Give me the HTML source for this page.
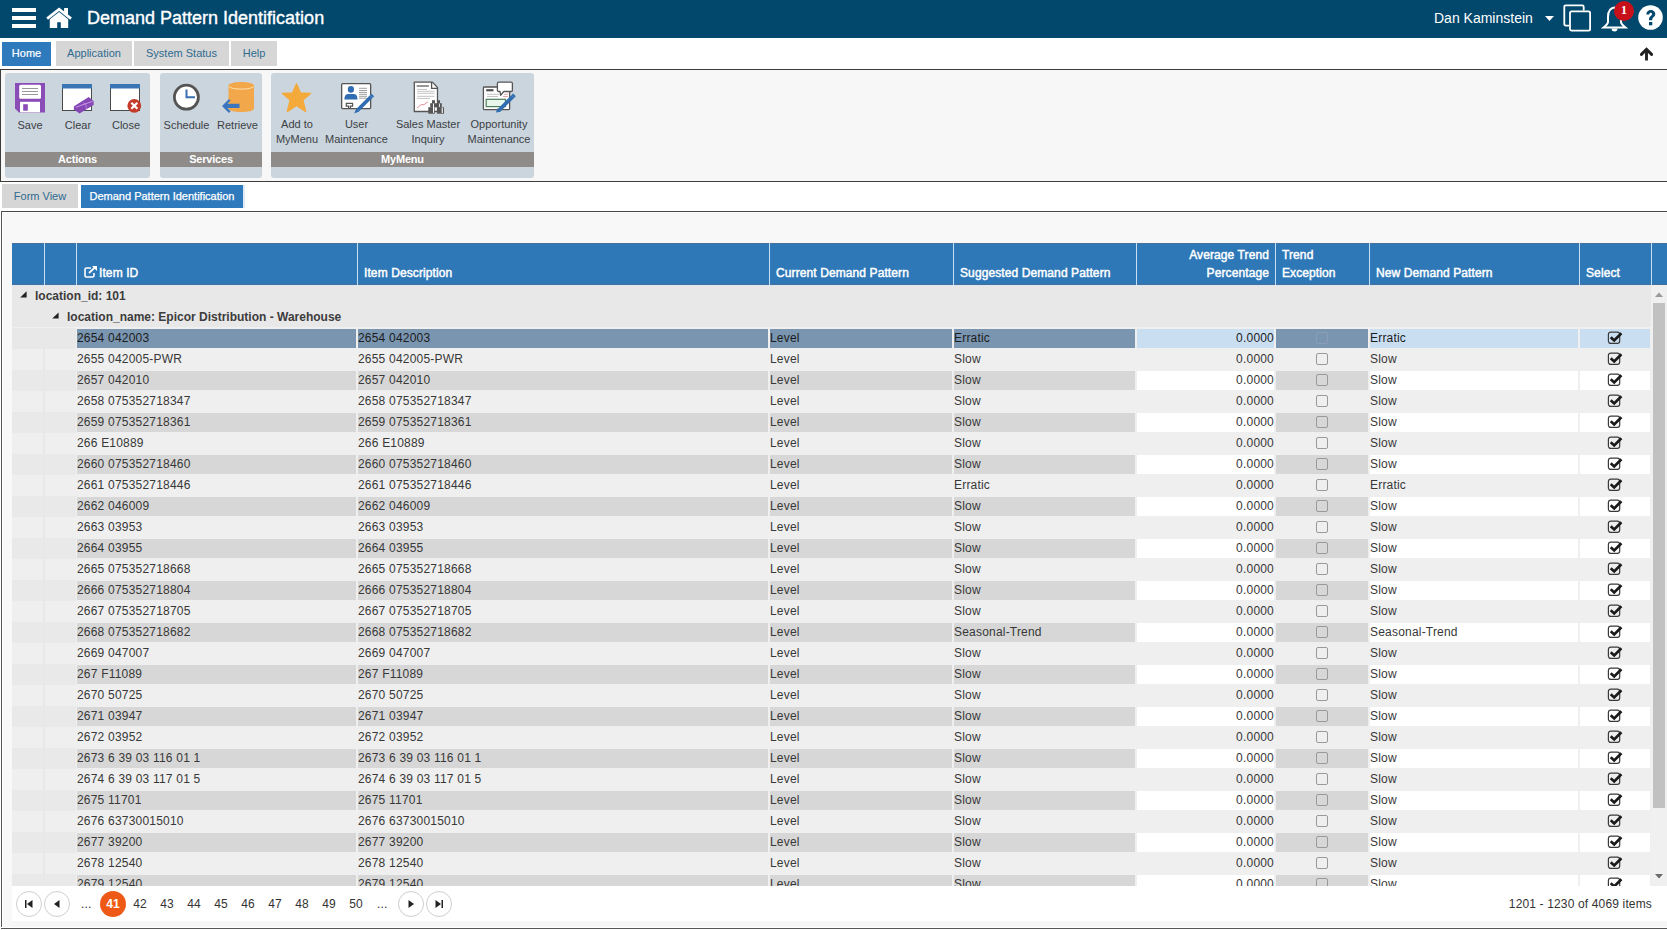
<!DOCTYPE html><html><head><meta charset="utf-8"><title>Demand Pattern Identification</title><style>
*{box-sizing:border-box;margin:0;padding:0}
html,body{width:1667px;height:930px;overflow:hidden;background:#fff;font-family:"Liberation Sans",sans-serif;color:#333}
.a{position:absolute}
#hdr{left:0;top:0;width:1667px;height:38px;background:#02486d}
#title{left:87px;top:7px;-webkit-text-stroke:0.35px #fff;font-size:18px;color:#fff;white-space:nowrap;line-height:22px}
#user{left:1434px;top:10px;font-size:14px;color:#fff;white-space:nowrap;line-height:16px}
.rtab{top:42px;height:24px;font-size:11px;line-height:24px;text-align:center;background:#d6d6d6;color:#2f6b8f;white-space:nowrap}
.rtab.on{background:#2f7abd;color:#fff;line-height:22px !important;-webkit-text-stroke:0.2px #fff}
#ribbon{left:0;top:69px;width:1667px;height:113px;border-top:1px solid #3d3d3d;border-bottom:1px solid #3d3d3d;border-left:1px solid #3d3d3d;background:#f7f7f7}
.grp{top:73px;height:105px;background:#cbd5de;border-radius:3px}
.glbl{left:0;right:0;top:79px;height:15px;background:#8e8b88;color:#fff;font-weight:bold;font-size:11px;line-height:15px;text-align:center;letter-spacing:-0.2px}
.bt{font-size:11px;line-height:15px;color:#3b3f44;text-align:center;white-space:nowrap;width:90px}
.ftab{top:184px;height:24px;font-size:11px;line-height:24px;text-align:center;background:#d6d6d6;color:#2f6b8f;white-space:nowrap}
.ftab.on{background:#2f7abd;color:#fff;top:185px;height:23px;line-height:22px;-webkit-text-stroke:0.25px #fff}
#content{left:1px;top:211px;width:1666px;height:719px;border-top:1px solid #4a4a4a;border-left:1px solid #555;background:#f8f8f8;box-shadow:inset 1px 1px 0 #fff}
#ghead{left:12px;top:243px;width:1655px;height:42px;background:#2e78b8}
.hc{top:243px;height:42px;border-left:1px solid #c6e0f7}
.ht{font-size:12px;font-weight:normal;color:#fff;white-space:nowrap;line-height:18px;letter-spacing:0.1px;-webkit-text-stroke:0.45px #fff}
#gbody{left:12px;top:285px;width:1639px;height:601px;background:#efefef;overflow:hidden}
.row{position:absolute;left:0;width:1639px;height:21px}
.c{position:absolute;top:1px;height:19px;font-size:12px;line-height:19px;white-space:nowrap;overflow:hidden;color:#383838;letter-spacing:0.2px}
.ro{background:#efefef}
.alt .ro{background:#d7d7d7}
.alt .ed{background:#fff}
.sel .ro{background:#7a95b0;color:#1c1c1c}
.sel .ed{background:#cadef2;color:#1c1c1c}
.ind{position:absolute;top:0;height:21px;background:#e9e9e9}
.row.lt .ind{background:#efefef}
.ind0{position:absolute;top:0;height:21px;background:#e8e8e8}
.grow{position:absolute;left:0;width:1639px;height:21px;background:#e9e8e9;font-size:12px;font-weight:bold;line-height:23px;color:#3c3c3c;white-space:nowrap}
.cb{position:absolute;width:12px;height:12px;border:1px solid #9a9a9a;border-radius:2px}
#pager{left:12px;top:886px;width:1655px;height:35px;background:#fff}
.pb{top:891px;width:26px;height:26px;border:1px solid #cfcfcf;border-radius:50%;background:#fff}
.pn{top:895px;font-size:12px;line-height:18px;color:#333;white-space:nowrap;letter-spacing:0.15px}
</style></head><body><div id="hdr" class="a"></div><div class="a" style="left:12px;top:8px;width:24px;height:4px;background:#fff"></div><div class="a" style="left:12px;top:16px;width:24px;height:4px;background:#fff"></div><div class="a" style="left:12px;top:24px;width:24px;height:4px;background:#fff"></div><svg class="a" style="left:46px;top:7px" width="27" height="22" viewBox="0 0 27 22"><path d="M0.3 10.6 L13.1 0.6 L25.9 10.6 L24.2 12.7 L13.1 4 L2 12.7 Z" fill="#fff"/><rect x="18.1" y="1" width="3.9" height="6.5" fill="#fff"/><path d="M3.8 12.3 L13.1 4.9 L22.2 12.3 L22.2 21 L14.8 21 L14.8 15.3 L11.2 15.3 L11.2 21 L3.8 21 Z" fill="#fff"/></svg><div id="title" class="a">Demand Pattern Identification</div><div id="user" class="a">Dan Kaminstein</div><svg class="a" style="left:1545px;top:16px" width="9" height="5" viewBox="0 0 9 5"><path d="M0 0 L9 0 L4.5 5 Z" fill="#fff"/></svg><svg class="a" style="left:1562px;top:3px" width="30" height="30" viewBox="0 0 30 30"><path d="M7 22.6 H3.8 Q2.3 22.6 2.3 21.1 V3.8 Q2.3 2.3 3.8 2.3 H20.2 Q21.7 2.3 21.7 3.8 V7.5" fill="none" stroke="#fff" stroke-width="1.8"/><rect x="8" y="8.3" width="20.1" height="19.4" rx="1.6" fill="none" stroke="#fff" stroke-width="1.8"/></svg><svg class="a" style="left:1601px;top:3px" width="30" height="30" viewBox="0 0 30 30"><path d="M13.5 4.5 C8 5 7 9.5 7 14 L7 19 C7 21 5 22.5 2.5 24.5 L24.5 24.5 C22 22.5 20 21 20 19 L20 14 C20 9.5 19 5 13.5 4.5 Z" fill="none" stroke="#fff" stroke-width="2"/><path d="M10.5 25.5 A3 3 0 0 0 16.5 25.5 Z" fill="#fff"/></svg><div class="a" style="left:1614px;top:1px;width:20px;height:20px;border-radius:50%;background:#c8101b"></div><div class="a" style="left:1614px;top:2px;width:20px;height:16px;font-family:'Liberation Serif',serif;font-size:12px;font-weight:bold;line-height:16px;text-align:center;color:#fff">1</div><svg class="a" style="left:1638px;top:5px" width="26" height="26" viewBox="0 0 26 26"><circle cx="12.5" cy="12.5" r="12.3" fill="#fff"/><path d="M8.3 9.5 C8.3 6.5 10.5 5 12.8 5 C15.5 5 17.3 6.8 17.3 9 C17.3 11.8 14.2 12.3 14.2 14.8 L14.2 15.3 L11 15.3 L11 14.5 C11 11 14 10.8 14 9.2 C14 8.3 13.4 7.8 12.6 7.8 C11.7 7.8 11.3 8.6 11.3 9.5 Z" fill="#02486d"/><rect x="11" y="17" width="3.3" height="3.3" fill="#02486d"/></svg><div class="a rtab on" style="left:2px;width:49px">Home</div><div class="a rtab" style="left:56px;width:76px;top:41px;height:25px;line-height:25px">Application</div><div class="a rtab" style="left:134px;width:95px;top:41px;height:25px;line-height:25px">System Status</div><div class="a rtab" style="left:231px;width:46px;top:41px;height:25px;line-height:25px">Help</div><svg class="a" style="left:1639px;top:47px" width="15" height="15" viewBox="0 0 15 15"><path d="M2.4 7.4 L7.5 2.4 L12.6 7.4" fill="none" stroke="#222" stroke-width="2.9" stroke-linecap="round" stroke-linejoin="miter"/><path d="M7.5 3.5 V13.5" fill="none" stroke="#222" stroke-width="2.9" stroke-linecap="butt"/></svg><div id="ribbon" class="a"></div><div class="a grp" style="left:5px;width:145px"><div class="a glbl">Actions</div></div><div class="a grp" style="left:160px;width:102px"><div class="a glbl">Services</div></div><div class="a grp" style="left:271px;width:263px"><div class="a glbl">MyMenu</div></div><div class="a bt" style="left:-15px;top:118px">Save</div><div class="a bt" style="left:33px;top:118px">Clear</div><div class="a bt" style="left:81px;top:118px">Close</div><div class="a bt" style="left:141.5px;top:118px">Schedule</div><div class="a bt" style="left:192.5px;top:118px">Retrieve</div><div class="a bt" style="left:252px;top:117px">Add to<br>MyMenu</div><div class="a bt" style="left:311.5px;top:117px">User<br>Maintenance</div><div class="a bt" style="left:383px;top:117px">Sales Master<br>Inquiry</div><div class="a bt" style="left:454px;top:117px">Opportunity<br>Maintenance</div><svg class="a" style="left:15px;top:83px" width="30" height="30" viewBox="0 0 30 30"><path d="M0 0 L30 0 L30 29.6 L4 29.6 L0 25.6 Z" fill="#8a4cb6"/><rect x="4.2" y="1.7" width="21.8" height="14.1" rx="1.5" fill="#fff"/><rect x="7" y="5" width="16" height="0.9" fill="#8d8d8d"/><rect x="7" y="8" width="16" height="0.9" fill="#8d8d8d"/><rect x="7" y="11" width="16" height="0.9" fill="#8d8d8d"/><rect x="5" y="18.8" width="20" height="10.5" fill="#fff"/><rect x="8.2" y="21.2" width="4.6" height="6.5" fill="#8a4cb6"/></svg><svg class="a" style="left:62px;top:84px" width="34" height="31" viewBox="0 0 34 31"><rect x="0.5" y="0.5" width="29" height="26" fill="#fff" stroke="#4a4a4a" stroke-width="1"/><rect x="0" y="0" width="30" height="4.5" fill="#3a76b5"/><path d="M12 22.3 L26.7 13.1 L31.6 16.9 L31.6 20.9 L17.5 29.4 L11.8 25.4 Z" fill="#8648b4"/><path d="M13.9 23.2 L30.7 17.3" stroke="#d8a8f5" stroke-width="0.8"/><path d="M21.2 18.3 L24.1 21.1 L24.3 25.1" fill="none" stroke="#c59ae8" stroke-width="0.7"/></svg><svg class="a" style="left:110px;top:84px" width="34" height="31" viewBox="0 0 34 31"><rect x="0.5" y="0.5" width="29" height="26" fill="#fff" stroke="#4a4a4a" stroke-width="1"/><rect x="0" y="0" width="30" height="4.5" fill="#3a76b5"/><circle cx="24.3" cy="21.8" r="6.9" fill="#c43b2b"/><path d="M21.3 18.8 L27.3 24.8 M27.3 18.8 L21.3 24.8" stroke="#fff" stroke-width="2.2"/></svg><svg class="a" style="left:172px;top:83px" width="29" height="29" viewBox="0 0 29 29"><circle cx="14.4" cy="14.2" r="12" fill="#fff" stroke="#545454" stroke-width="2.8"/><path d="M14.5 6.5 L14.5 14.3 L23 14.3" fill="none" stroke="#3a6fb0" stroke-width="2"/></svg><svg class="a" style="left:221px;top:81px" width="35" height="33" viewBox="0 0 35 33"><path d="M7.5 4.5 C7.5 -0.3 33 -0.3 33 4.5 L33 27.5 C33 32.3 7.5 32.3 7.5 27.5 Z" fill="#f2a84a"/><path d="M8 5.5 C10 9 30.5 9 32.5 5.5" fill="none" stroke="#fde2b0" stroke-width="1"/><path d="M1 25 L8 18 L9.5 19.5 L6.5 22.8 L18.5 22.8 L18.5 27 L6.5 27 L9.5 30.3 L8 32 Z" fill="#3a75bd"/></svg><svg class="a" style="left:281px;top:83px" width="31" height="30" viewBox="0 0 31 30"><path d="M15.5 1 L19.4 10 L29.5 10.4 L21.8 16.8 L24.5 28.5 L15.5 22.5 L6.5 28.5 L9.2 16.8 L1.5 10.4 L11.6 10 Z" fill="#f4aa3b" stroke="#f4aa3b" stroke-width="1.5" stroke-linejoin="round"/></svg><svg class="a" style="left:341px;top:83px" width="34" height="32" viewBox="0 0 34 32"><rect x="0.65" y="0.65" width="29" height="24.9" rx="1" fill="#fff" stroke="#555" stroke-width="1.3"/><ellipse cx="9.9" cy="6.4" rx="3.1" ry="3.3" fill="#2f6db0"/><path d="M3.4 16.5 C3.4 12 5.5 10.9 7.5 10.9 H12.3 C14.5 10.9 16.5 12 16.5 16.5 Z" fill="#2f6db0"/><path d="M18 5.3 H26 M18 7.5 H26 M18 9.4 H26 M18 11.3 H26 M18 13.3 H26 M18 15.2 H26" stroke="#777" stroke-width="0.7"/><path d="M7.6 25.5 V23.2 H5.3 V20.3 H11.6 V23.2 H9.4 V25.5" fill="none" stroke="#555" stroke-width="1.2"/><path d="M31.8 12 L16.8 27" stroke="#2f6db0" stroke-width="3.8"/><path d="M18.3 28.5 L15.3 25.5 L13.2 30.6 Z" fill="#2f6db0"/><path d="M28.9 12.3 L31.5 14.9" stroke="#6a9fd6" stroke-width="0.8"/></svg><svg class="a" style="left:410px;top:78px" width="36" height="38" viewBox="0 0 36 38"><path d="M4.3 4.1 H22.4 L27.5 9.5 V33.5 H4.3 Z" fill="#fff" stroke="#555" stroke-width="1.3" stroke-linejoin="round"/><path d="M21.6 4.1 V10.3 H27.5" fill="none" stroke="#555" stroke-width="1.3"/><path d="M6.7 8 H18.9" stroke="#6a6a6a" stroke-width="1.4"/><path d="M7.1 11.4 H17 M7.1 13.3 H24.5 M7.1 15.3 H24.5 M7.1 18.3 H24.5 M7.1 20.4 H19.8" stroke="#9a9a9a" stroke-width="0.6"/><path d="M7 30 C9 28.5 11 26 13 26.5 C14 27.5 15.5 25 18 24" fill="none" stroke="#d9737a" stroke-width="0.8"/><rect x="18.3" y="29.2" width="6.4" height="6.5" fill="#555"/><rect x="27.1" y="29.2" width="6.9" height="6.5" fill="#555"/><rect x="20.2" y="25.2" width="11.6" height="4.2" fill="#555"/><rect x="22" y="22.2" width="3" height="3.2" fill="#555"/><rect x="27" y="22.2" width="3" height="3.2" fill="#555"/><rect x="23" y="25.6" width="1" height="9.2" fill="#fff"/><rect x="31.7" y="29.6" width="1.1" height="5.4" fill="#fff"/><rect x="29.2" y="25.6" width="0.8" height="3.4" fill="#fff"/></svg><svg class="a" style="left:478px;top:78px" width="40" height="38" viewBox="0 0 40 38"><rect x="5.4" y="9" width="26.2" height="22.6" rx="0.8" fill="#fff" stroke="#555" stroke-width="1.3"/><rect x="8.2" y="11.2" width="7.3" height="2.1" fill="#4a4a4a"/><path d="M9 16.3 H21 M9 18.5 H20" stroke="#a9a9a9" stroke-width="0.7"/><path d="M26 16.3 H30 M25 18.5 H30" stroke="#d98080" stroke-width="0.7"/><rect x="8.2" y="21.3" width="19.3" height="7.3" fill="#e8f6ec" stroke="#4c7d5c" stroke-width="1.2"/><path d="M19.4 5.4 Q19.4 4.1 20.7 4.1 H33.1 Q34.4 4.1 34.4 5.4 V12.2 Q34.4 13.5 33.1 13.5 H25.8 L22.6 17.2 L22 13.5 H20.7 Q19.4 13.5 19.4 12.2 Z" fill="#fff" stroke="#555" stroke-width="1.3" stroke-linejoin="round"/><path d="M36.5 16.8 L21.3 32" stroke="#2f6db0" stroke-width="3.8"/><path d="M19.6 30.3 L23 33.7 L17.8 34.6 Z" fill="#2f6db0"/><path d="M35.9 19.5 L33.9 17.5" stroke="#5b93cf" stroke-width="0.8"/></svg><div class="a ftab" style="left:2px;width:76px">Form View</div><div class="a ftab on" style="left:81px;width:162px">Demand Pattern Identification</div><div class="a" style="left:243px;top:185px;width:2px;height:23px;background:#dde9f4"></div><div id="content" class="a"></div><div id="ghead" class="a"></div><div class="a" style="left:12px;top:243px;width:1655px;height:1px;background:#44709a"></div><div class="a" style="left:12px;top:284px;width:1655px;height:1px;background:#44709a"></div><div class="a" style="left:44px;top:243px;width:1px;height:42px;background:#c6e0f7"></div><div class="a" style="left:76px;top:243px;width:1px;height:42px;background:#c6e0f7"></div><div class="a" style="left:357px;top:243px;width:1px;height:42px;background:#c6e0f7"></div><div class="a" style="left:769px;top:243px;width:1px;height:42px;background:#c6e0f7"></div><div class="a" style="left:953px;top:243px;width:1px;height:42px;background:#c6e0f7"></div><div class="a" style="left:1136px;top:243px;width:1px;height:42px;background:#c6e0f7"></div><div class="a" style="left:1275px;top:243px;width:1px;height:42px;background:#c6e0f7"></div><div class="a" style="left:1369px;top:243px;width:1px;height:42px;background:#c6e0f7"></div><div class="a" style="left:1579px;top:243px;width:1px;height:42px;background:#c6e0f7"></div><div class="a" style="left:1651px;top:243px;width:1px;height:42px;background:#c6e0f7"></div><div class="a ht" style="left:99px;top:264px">Item ID</div><svg class="a" style="left:84px;top:266px" width="14" height="12" viewBox="0 0 14 12"><path d="M7 2 H2.5 Q1 2 1 3.5 V9.5 Q1 11 2.5 11 H8.5 Q10 11 10 9.5 V7" fill="none" stroke="#fff" stroke-width="1.6"/><path d="M5 7 L11.5 0.8" stroke="#fff" stroke-width="1.8"/><path d="M8 0 H13 V5 Z" fill="#fff"/></svg><div class="a ht" style="left:364px;top:264px">Item Description</div><div class="a ht" style="left:776px;top:264px">Current Demand Pattern</div><div class="a ht" style="left:960px;top:264px">Suggested Demand Pattern</div><div class="a ht" style="left:1069px;width:200px;top:246px;text-align:right">Average Trend</div><div class="a ht" style="left:1069px;width:200px;top:264px;text-align:right">Percentage</div><div class="a ht" style="left:1282px;top:246px">Trend</div><div class="a ht" style="left:1282px;top:264px">Exception</div><div class="a ht" style="left:1376px;top:264px">New Demand Pattern</div><div class="a ht" style="left:1586px;top:264px">Select</div><div id="gbody" class="a"><div style="position:absolute;left:0;top:0;width:1639px;height:1px;background:#dfe8f2;z-index:2"></div><div class="grow" style="top:0px"><svg style="position:absolute;left:8px;top:6px" width="8" height="8" viewBox="0 0 8 8"><path d="M6.6 0.2 L6.6 6.4 L0.2 6.4 Z" fill="#222"/></svg><span style="position:absolute;left:23px;top:0">location_id: 101</span></div><div class="grow" style="top:21px"><svg style="position:absolute;left:40px;top:6px" width="8" height="8" viewBox="0 0 8 8"><path d="M6.6 0.4 L6.6 6.6 L0.2 6.6 Z" fill="#222"/></svg><span style="position:absolute;left:55px;top:0">location_name: Epicor Distribution - Warehouse</span></div><div class="row sel" style="top:43px"><div class="ind0" style="left:0;width:64px"></div><div class="c ro" style="left:65px;width:279px;">2654 042003</div><div class="c ro" style="left:346px;width:410px;">2654 042003</div><div class="c ro" style="left:758px;width:182px;">Level</div><div class="c ro" style="left:942px;width:181px;">Erratic</div><div class="c ed" style="left:1125px;width:137px;text-align:right">0.0000</div><div class="c ro" style="left:1264px;width:92px;"><div class="cb" style="left:40px;top:3px;border-color:#8a9fb5"></div></div><div class="c ed" style="left:1358px;width:208px;">Erratic</div><div class="c ed" style="left:1568px;width:70px;"><svg style="position:absolute;left:26px;top:0px" width="18" height="17" viewBox="0 0 18 17"><rect x="2.4" y="3.1" width="11.3" height="11.3" rx="2.3" fill="none" stroke="#3a3a3a" stroke-width="1.2"/><path d="M4.7 8.2 L8.2 11.4 L15.4 4.2" fill="none" stroke="#1a1a1a" stroke-width="2.7" stroke-linejoin="miter" stroke-linecap="butt"/></svg></div></div><div class="row lt" style="top:64px"><div class="ind0" style="left:0;width:64px"></div><div class="ind" style="left:0;width:31px"></div><div class="ind" style="left:33px;width:31px"></div><div class="c ro" style="left:65px;width:279px;">2655 042005-PWR</div><div class="c ro" style="left:346px;width:410px;">2655 042005-PWR</div><div class="c ro" style="left:758px;width:182px;">Level</div><div class="c ro" style="left:942px;width:181px;">Slow</div><div class="c ed" style="left:1125px;width:137px;text-align:right">0.0000</div><div class="c ro" style="left:1264px;width:92px;"><div class="cb" style="left:40px;top:3px;border-color:#9a9a9a"></div></div><div class="c ed" style="left:1358px;width:208px;">Slow</div><div class="c ed" style="left:1568px;width:70px;"><svg style="position:absolute;left:26px;top:0px" width="18" height="17" viewBox="0 0 18 17"><rect x="2.4" y="3.1" width="11.3" height="11.3" rx="2.3" fill="none" stroke="#3a3a3a" stroke-width="1.2"/><path d="M4.7 8.2 L8.2 11.4 L15.4 4.2" fill="none" stroke="#1a1a1a" stroke-width="2.7" stroke-linejoin="miter" stroke-linecap="butt"/></svg></div></div><div class="row alt" style="top:85px"><div class="ind0" style="left:0;width:64px"></div><div class="ind" style="left:0;width:31px"></div><div class="ind" style="left:33px;width:31px"></div><div class="c ro" style="left:65px;width:279px;">2657 042010</div><div class="c ro" style="left:346px;width:410px;">2657 042010</div><div class="c ro" style="left:758px;width:182px;">Level</div><div class="c ro" style="left:942px;width:181px;">Slow</div><div class="c ed" style="left:1125px;width:137px;text-align:right">0.0000</div><div class="c ro" style="left:1264px;width:92px;"><div class="cb" style="left:40px;top:3px;border-color:#9a9a9a"></div></div><div class="c ed" style="left:1358px;width:208px;">Slow</div><div class="c ed" style="left:1568px;width:70px;"><svg style="position:absolute;left:26px;top:0px" width="18" height="17" viewBox="0 0 18 17"><rect x="2.4" y="3.1" width="11.3" height="11.3" rx="2.3" fill="none" stroke="#3a3a3a" stroke-width="1.2"/><path d="M4.7 8.2 L8.2 11.4 L15.4 4.2" fill="none" stroke="#1a1a1a" stroke-width="2.7" stroke-linejoin="miter" stroke-linecap="butt"/></svg></div></div><div class="row lt" style="top:106px"><div class="ind0" style="left:0;width:64px"></div><div class="ind" style="left:0;width:31px"></div><div class="ind" style="left:33px;width:31px"></div><div class="c ro" style="left:65px;width:279px;">2658 075352718347</div><div class="c ro" style="left:346px;width:410px;">2658 075352718347</div><div class="c ro" style="left:758px;width:182px;">Level</div><div class="c ro" style="left:942px;width:181px;">Slow</div><div class="c ed" style="left:1125px;width:137px;text-align:right">0.0000</div><div class="c ro" style="left:1264px;width:92px;"><div class="cb" style="left:40px;top:3px;border-color:#9a9a9a"></div></div><div class="c ed" style="left:1358px;width:208px;">Slow</div><div class="c ed" style="left:1568px;width:70px;"><svg style="position:absolute;left:26px;top:0px" width="18" height="17" viewBox="0 0 18 17"><rect x="2.4" y="3.1" width="11.3" height="11.3" rx="2.3" fill="none" stroke="#3a3a3a" stroke-width="1.2"/><path d="M4.7 8.2 L8.2 11.4 L15.4 4.2" fill="none" stroke="#1a1a1a" stroke-width="2.7" stroke-linejoin="miter" stroke-linecap="butt"/></svg></div></div><div class="row alt" style="top:127px"><div class="ind0" style="left:0;width:64px"></div><div class="ind" style="left:0;width:31px"></div><div class="ind" style="left:33px;width:31px"></div><div class="c ro" style="left:65px;width:279px;">2659 075352718361</div><div class="c ro" style="left:346px;width:410px;">2659 075352718361</div><div class="c ro" style="left:758px;width:182px;">Level</div><div class="c ro" style="left:942px;width:181px;">Slow</div><div class="c ed" style="left:1125px;width:137px;text-align:right">0.0000</div><div class="c ro" style="left:1264px;width:92px;"><div class="cb" style="left:40px;top:3px;border-color:#9a9a9a"></div></div><div class="c ed" style="left:1358px;width:208px;">Slow</div><div class="c ed" style="left:1568px;width:70px;"><svg style="position:absolute;left:26px;top:0px" width="18" height="17" viewBox="0 0 18 17"><rect x="2.4" y="3.1" width="11.3" height="11.3" rx="2.3" fill="none" stroke="#3a3a3a" stroke-width="1.2"/><path d="M4.7 8.2 L8.2 11.4 L15.4 4.2" fill="none" stroke="#1a1a1a" stroke-width="2.7" stroke-linejoin="miter" stroke-linecap="butt"/></svg></div></div><div class="row lt" style="top:148px"><div class="ind0" style="left:0;width:64px"></div><div class="ind" style="left:0;width:31px"></div><div class="ind" style="left:33px;width:31px"></div><div class="c ro" style="left:65px;width:279px;">266 E10889</div><div class="c ro" style="left:346px;width:410px;">266 E10889</div><div class="c ro" style="left:758px;width:182px;">Level</div><div class="c ro" style="left:942px;width:181px;">Slow</div><div class="c ed" style="left:1125px;width:137px;text-align:right">0.0000</div><div class="c ro" style="left:1264px;width:92px;"><div class="cb" style="left:40px;top:3px;border-color:#9a9a9a"></div></div><div class="c ed" style="left:1358px;width:208px;">Slow</div><div class="c ed" style="left:1568px;width:70px;"><svg style="position:absolute;left:26px;top:0px" width="18" height="17" viewBox="0 0 18 17"><rect x="2.4" y="3.1" width="11.3" height="11.3" rx="2.3" fill="none" stroke="#3a3a3a" stroke-width="1.2"/><path d="M4.7 8.2 L8.2 11.4 L15.4 4.2" fill="none" stroke="#1a1a1a" stroke-width="2.7" stroke-linejoin="miter" stroke-linecap="butt"/></svg></div></div><div class="row alt" style="top:169px"><div class="ind0" style="left:0;width:64px"></div><div class="ind" style="left:0;width:31px"></div><div class="ind" style="left:33px;width:31px"></div><div class="c ro" style="left:65px;width:279px;">2660 075352718460</div><div class="c ro" style="left:346px;width:410px;">2660 075352718460</div><div class="c ro" style="left:758px;width:182px;">Level</div><div class="c ro" style="left:942px;width:181px;">Slow</div><div class="c ed" style="left:1125px;width:137px;text-align:right">0.0000</div><div class="c ro" style="left:1264px;width:92px;"><div class="cb" style="left:40px;top:3px;border-color:#9a9a9a"></div></div><div class="c ed" style="left:1358px;width:208px;">Slow</div><div class="c ed" style="left:1568px;width:70px;"><svg style="position:absolute;left:26px;top:0px" width="18" height="17" viewBox="0 0 18 17"><rect x="2.4" y="3.1" width="11.3" height="11.3" rx="2.3" fill="none" stroke="#3a3a3a" stroke-width="1.2"/><path d="M4.7 8.2 L8.2 11.4 L15.4 4.2" fill="none" stroke="#1a1a1a" stroke-width="2.7" stroke-linejoin="miter" stroke-linecap="butt"/></svg></div></div><div class="row lt" style="top:190px"><div class="ind0" style="left:0;width:64px"></div><div class="ind" style="left:0;width:31px"></div><div class="ind" style="left:33px;width:31px"></div><div class="c ro" style="left:65px;width:279px;">2661 075352718446</div><div class="c ro" style="left:346px;width:410px;">2661 075352718446</div><div class="c ro" style="left:758px;width:182px;">Level</div><div class="c ro" style="left:942px;width:181px;">Erratic</div><div class="c ed" style="left:1125px;width:137px;text-align:right">0.0000</div><div class="c ro" style="left:1264px;width:92px;"><div class="cb" style="left:40px;top:3px;border-color:#9a9a9a"></div></div><div class="c ed" style="left:1358px;width:208px;">Erratic</div><div class="c ed" style="left:1568px;width:70px;"><svg style="position:absolute;left:26px;top:0px" width="18" height="17" viewBox="0 0 18 17"><rect x="2.4" y="3.1" width="11.3" height="11.3" rx="2.3" fill="none" stroke="#3a3a3a" stroke-width="1.2"/><path d="M4.7 8.2 L8.2 11.4 L15.4 4.2" fill="none" stroke="#1a1a1a" stroke-width="2.7" stroke-linejoin="miter" stroke-linecap="butt"/></svg></div></div><div class="row alt" style="top:211px"><div class="ind0" style="left:0;width:64px"></div><div class="ind" style="left:0;width:31px"></div><div class="ind" style="left:33px;width:31px"></div><div class="c ro" style="left:65px;width:279px;">2662 046009</div><div class="c ro" style="left:346px;width:410px;">2662 046009</div><div class="c ro" style="left:758px;width:182px;">Level</div><div class="c ro" style="left:942px;width:181px;">Slow</div><div class="c ed" style="left:1125px;width:137px;text-align:right">0.0000</div><div class="c ro" style="left:1264px;width:92px;"><div class="cb" style="left:40px;top:3px;border-color:#9a9a9a"></div></div><div class="c ed" style="left:1358px;width:208px;">Slow</div><div class="c ed" style="left:1568px;width:70px;"><svg style="position:absolute;left:26px;top:0px" width="18" height="17" viewBox="0 0 18 17"><rect x="2.4" y="3.1" width="11.3" height="11.3" rx="2.3" fill="none" stroke="#3a3a3a" stroke-width="1.2"/><path d="M4.7 8.2 L8.2 11.4 L15.4 4.2" fill="none" stroke="#1a1a1a" stroke-width="2.7" stroke-linejoin="miter" stroke-linecap="butt"/></svg></div></div><div class="row lt" style="top:232px"><div class="ind0" style="left:0;width:64px"></div><div class="ind" style="left:0;width:31px"></div><div class="ind" style="left:33px;width:31px"></div><div class="c ro" style="left:65px;width:279px;">2663 03953</div><div class="c ro" style="left:346px;width:410px;">2663 03953</div><div class="c ro" style="left:758px;width:182px;">Level</div><div class="c ro" style="left:942px;width:181px;">Slow</div><div class="c ed" style="left:1125px;width:137px;text-align:right">0.0000</div><div class="c ro" style="left:1264px;width:92px;"><div class="cb" style="left:40px;top:3px;border-color:#9a9a9a"></div></div><div class="c ed" style="left:1358px;width:208px;">Slow</div><div class="c ed" style="left:1568px;width:70px;"><svg style="position:absolute;left:26px;top:0px" width="18" height="17" viewBox="0 0 18 17"><rect x="2.4" y="3.1" width="11.3" height="11.3" rx="2.3" fill="none" stroke="#3a3a3a" stroke-width="1.2"/><path d="M4.7 8.2 L8.2 11.4 L15.4 4.2" fill="none" stroke="#1a1a1a" stroke-width="2.7" stroke-linejoin="miter" stroke-linecap="butt"/></svg></div></div><div class="row alt" style="top:253px"><div class="ind0" style="left:0;width:64px"></div><div class="ind" style="left:0;width:31px"></div><div class="ind" style="left:33px;width:31px"></div><div class="c ro" style="left:65px;width:279px;">2664 03955</div><div class="c ro" style="left:346px;width:410px;">2664 03955</div><div class="c ro" style="left:758px;width:182px;">Level</div><div class="c ro" style="left:942px;width:181px;">Slow</div><div class="c ed" style="left:1125px;width:137px;text-align:right">0.0000</div><div class="c ro" style="left:1264px;width:92px;"><div class="cb" style="left:40px;top:3px;border-color:#9a9a9a"></div></div><div class="c ed" style="left:1358px;width:208px;">Slow</div><div class="c ed" style="left:1568px;width:70px;"><svg style="position:absolute;left:26px;top:0px" width="18" height="17" viewBox="0 0 18 17"><rect x="2.4" y="3.1" width="11.3" height="11.3" rx="2.3" fill="none" stroke="#3a3a3a" stroke-width="1.2"/><path d="M4.7 8.2 L8.2 11.4 L15.4 4.2" fill="none" stroke="#1a1a1a" stroke-width="2.7" stroke-linejoin="miter" stroke-linecap="butt"/></svg></div></div><div class="row lt" style="top:274px"><div class="ind0" style="left:0;width:64px"></div><div class="ind" style="left:0;width:31px"></div><div class="ind" style="left:33px;width:31px"></div><div class="c ro" style="left:65px;width:279px;">2665 075352718668</div><div class="c ro" style="left:346px;width:410px;">2665 075352718668</div><div class="c ro" style="left:758px;width:182px;">Level</div><div class="c ro" style="left:942px;width:181px;">Slow</div><div class="c ed" style="left:1125px;width:137px;text-align:right">0.0000</div><div class="c ro" style="left:1264px;width:92px;"><div class="cb" style="left:40px;top:3px;border-color:#9a9a9a"></div></div><div class="c ed" style="left:1358px;width:208px;">Slow</div><div class="c ed" style="left:1568px;width:70px;"><svg style="position:absolute;left:26px;top:0px" width="18" height="17" viewBox="0 0 18 17"><rect x="2.4" y="3.1" width="11.3" height="11.3" rx="2.3" fill="none" stroke="#3a3a3a" stroke-width="1.2"/><path d="M4.7 8.2 L8.2 11.4 L15.4 4.2" fill="none" stroke="#1a1a1a" stroke-width="2.7" stroke-linejoin="miter" stroke-linecap="butt"/></svg></div></div><div class="row alt" style="top:295px"><div class="ind0" style="left:0;width:64px"></div><div class="ind" style="left:0;width:31px"></div><div class="ind" style="left:33px;width:31px"></div><div class="c ro" style="left:65px;width:279px;">2666 075352718804</div><div class="c ro" style="left:346px;width:410px;">2666 075352718804</div><div class="c ro" style="left:758px;width:182px;">Level</div><div class="c ro" style="left:942px;width:181px;">Slow</div><div class="c ed" style="left:1125px;width:137px;text-align:right">0.0000</div><div class="c ro" style="left:1264px;width:92px;"><div class="cb" style="left:40px;top:3px;border-color:#9a9a9a"></div></div><div class="c ed" style="left:1358px;width:208px;">Slow</div><div class="c ed" style="left:1568px;width:70px;"><svg style="position:absolute;left:26px;top:0px" width="18" height="17" viewBox="0 0 18 17"><rect x="2.4" y="3.1" width="11.3" height="11.3" rx="2.3" fill="none" stroke="#3a3a3a" stroke-width="1.2"/><path d="M4.7 8.2 L8.2 11.4 L15.4 4.2" fill="none" stroke="#1a1a1a" stroke-width="2.7" stroke-linejoin="miter" stroke-linecap="butt"/></svg></div></div><div class="row lt" style="top:316px"><div class="ind0" style="left:0;width:64px"></div><div class="ind" style="left:0;width:31px"></div><div class="ind" style="left:33px;width:31px"></div><div class="c ro" style="left:65px;width:279px;">2667 075352718705</div><div class="c ro" style="left:346px;width:410px;">2667 075352718705</div><div class="c ro" style="left:758px;width:182px;">Level</div><div class="c ro" style="left:942px;width:181px;">Slow</div><div class="c ed" style="left:1125px;width:137px;text-align:right">0.0000</div><div class="c ro" style="left:1264px;width:92px;"><div class="cb" style="left:40px;top:3px;border-color:#9a9a9a"></div></div><div class="c ed" style="left:1358px;width:208px;">Slow</div><div class="c ed" style="left:1568px;width:70px;"><svg style="position:absolute;left:26px;top:0px" width="18" height="17" viewBox="0 0 18 17"><rect x="2.4" y="3.1" width="11.3" height="11.3" rx="2.3" fill="none" stroke="#3a3a3a" stroke-width="1.2"/><path d="M4.7 8.2 L8.2 11.4 L15.4 4.2" fill="none" stroke="#1a1a1a" stroke-width="2.7" stroke-linejoin="miter" stroke-linecap="butt"/></svg></div></div><div class="row alt" style="top:337px"><div class="ind0" style="left:0;width:64px"></div><div class="ind" style="left:0;width:31px"></div><div class="ind" style="left:33px;width:31px"></div><div class="c ro" style="left:65px;width:279px;">2668 075352718682</div><div class="c ro" style="left:346px;width:410px;">2668 075352718682</div><div class="c ro" style="left:758px;width:182px;">Level</div><div class="c ro" style="left:942px;width:181px;">Seasonal-Trend</div><div class="c ed" style="left:1125px;width:137px;text-align:right">0.0000</div><div class="c ro" style="left:1264px;width:92px;"><div class="cb" style="left:40px;top:3px;border-color:#9a9a9a"></div></div><div class="c ed" style="left:1358px;width:208px;">Seasonal-Trend</div><div class="c ed" style="left:1568px;width:70px;"><svg style="position:absolute;left:26px;top:0px" width="18" height="17" viewBox="0 0 18 17"><rect x="2.4" y="3.1" width="11.3" height="11.3" rx="2.3" fill="none" stroke="#3a3a3a" stroke-width="1.2"/><path d="M4.7 8.2 L8.2 11.4 L15.4 4.2" fill="none" stroke="#1a1a1a" stroke-width="2.7" stroke-linejoin="miter" stroke-linecap="butt"/></svg></div></div><div class="row lt" style="top:358px"><div class="ind0" style="left:0;width:64px"></div><div class="ind" style="left:0;width:31px"></div><div class="ind" style="left:33px;width:31px"></div><div class="c ro" style="left:65px;width:279px;">2669 047007</div><div class="c ro" style="left:346px;width:410px;">2669 047007</div><div class="c ro" style="left:758px;width:182px;">Level</div><div class="c ro" style="left:942px;width:181px;">Slow</div><div class="c ed" style="left:1125px;width:137px;text-align:right">0.0000</div><div class="c ro" style="left:1264px;width:92px;"><div class="cb" style="left:40px;top:3px;border-color:#9a9a9a"></div></div><div class="c ed" style="left:1358px;width:208px;">Slow</div><div class="c ed" style="left:1568px;width:70px;"><svg style="position:absolute;left:26px;top:0px" width="18" height="17" viewBox="0 0 18 17"><rect x="2.4" y="3.1" width="11.3" height="11.3" rx="2.3" fill="none" stroke="#3a3a3a" stroke-width="1.2"/><path d="M4.7 8.2 L8.2 11.4 L15.4 4.2" fill="none" stroke="#1a1a1a" stroke-width="2.7" stroke-linejoin="miter" stroke-linecap="butt"/></svg></div></div><div class="row alt" style="top:379px"><div class="ind0" style="left:0;width:64px"></div><div class="ind" style="left:0;width:31px"></div><div class="ind" style="left:33px;width:31px"></div><div class="c ro" style="left:65px;width:279px;">267 F11089</div><div class="c ro" style="left:346px;width:410px;">267 F11089</div><div class="c ro" style="left:758px;width:182px;">Level</div><div class="c ro" style="left:942px;width:181px;">Slow</div><div class="c ed" style="left:1125px;width:137px;text-align:right">0.0000</div><div class="c ro" style="left:1264px;width:92px;"><div class="cb" style="left:40px;top:3px;border-color:#9a9a9a"></div></div><div class="c ed" style="left:1358px;width:208px;">Slow</div><div class="c ed" style="left:1568px;width:70px;"><svg style="position:absolute;left:26px;top:0px" width="18" height="17" viewBox="0 0 18 17"><rect x="2.4" y="3.1" width="11.3" height="11.3" rx="2.3" fill="none" stroke="#3a3a3a" stroke-width="1.2"/><path d="M4.7 8.2 L8.2 11.4 L15.4 4.2" fill="none" stroke="#1a1a1a" stroke-width="2.7" stroke-linejoin="miter" stroke-linecap="butt"/></svg></div></div><div class="row lt" style="top:400px"><div class="ind0" style="left:0;width:64px"></div><div class="ind" style="left:0;width:31px"></div><div class="ind" style="left:33px;width:31px"></div><div class="c ro" style="left:65px;width:279px;">2670 50725</div><div class="c ro" style="left:346px;width:410px;">2670 50725</div><div class="c ro" style="left:758px;width:182px;">Level</div><div class="c ro" style="left:942px;width:181px;">Slow</div><div class="c ed" style="left:1125px;width:137px;text-align:right">0.0000</div><div class="c ro" style="left:1264px;width:92px;"><div class="cb" style="left:40px;top:3px;border-color:#9a9a9a"></div></div><div class="c ed" style="left:1358px;width:208px;">Slow</div><div class="c ed" style="left:1568px;width:70px;"><svg style="position:absolute;left:26px;top:0px" width="18" height="17" viewBox="0 0 18 17"><rect x="2.4" y="3.1" width="11.3" height="11.3" rx="2.3" fill="none" stroke="#3a3a3a" stroke-width="1.2"/><path d="M4.7 8.2 L8.2 11.4 L15.4 4.2" fill="none" stroke="#1a1a1a" stroke-width="2.7" stroke-linejoin="miter" stroke-linecap="butt"/></svg></div></div><div class="row alt" style="top:421px"><div class="ind0" style="left:0;width:64px"></div><div class="ind" style="left:0;width:31px"></div><div class="ind" style="left:33px;width:31px"></div><div class="c ro" style="left:65px;width:279px;">2671 03947</div><div class="c ro" style="left:346px;width:410px;">2671 03947</div><div class="c ro" style="left:758px;width:182px;">Level</div><div class="c ro" style="left:942px;width:181px;">Slow</div><div class="c ed" style="left:1125px;width:137px;text-align:right">0.0000</div><div class="c ro" style="left:1264px;width:92px;"><div class="cb" style="left:40px;top:3px;border-color:#9a9a9a"></div></div><div class="c ed" style="left:1358px;width:208px;">Slow</div><div class="c ed" style="left:1568px;width:70px;"><svg style="position:absolute;left:26px;top:0px" width="18" height="17" viewBox="0 0 18 17"><rect x="2.4" y="3.1" width="11.3" height="11.3" rx="2.3" fill="none" stroke="#3a3a3a" stroke-width="1.2"/><path d="M4.7 8.2 L8.2 11.4 L15.4 4.2" fill="none" stroke="#1a1a1a" stroke-width="2.7" stroke-linejoin="miter" stroke-linecap="butt"/></svg></div></div><div class="row lt" style="top:442px"><div class="ind0" style="left:0;width:64px"></div><div class="ind" style="left:0;width:31px"></div><div class="ind" style="left:33px;width:31px"></div><div class="c ro" style="left:65px;width:279px;">2672 03952</div><div class="c ro" style="left:346px;width:410px;">2672 03952</div><div class="c ro" style="left:758px;width:182px;">Level</div><div class="c ro" style="left:942px;width:181px;">Slow</div><div class="c ed" style="left:1125px;width:137px;text-align:right">0.0000</div><div class="c ro" style="left:1264px;width:92px;"><div class="cb" style="left:40px;top:3px;border-color:#9a9a9a"></div></div><div class="c ed" style="left:1358px;width:208px;">Slow</div><div class="c ed" style="left:1568px;width:70px;"><svg style="position:absolute;left:26px;top:0px" width="18" height="17" viewBox="0 0 18 17"><rect x="2.4" y="3.1" width="11.3" height="11.3" rx="2.3" fill="none" stroke="#3a3a3a" stroke-width="1.2"/><path d="M4.7 8.2 L8.2 11.4 L15.4 4.2" fill="none" stroke="#1a1a1a" stroke-width="2.7" stroke-linejoin="miter" stroke-linecap="butt"/></svg></div></div><div class="row alt" style="top:463px"><div class="ind0" style="left:0;width:64px"></div><div class="ind" style="left:0;width:31px"></div><div class="ind" style="left:33px;width:31px"></div><div class="c ro" style="left:65px;width:279px;">2673 6 39 03 116 01 1</div><div class="c ro" style="left:346px;width:410px;">2673 6 39 03 116 01 1</div><div class="c ro" style="left:758px;width:182px;">Level</div><div class="c ro" style="left:942px;width:181px;">Slow</div><div class="c ed" style="left:1125px;width:137px;text-align:right">0.0000</div><div class="c ro" style="left:1264px;width:92px;"><div class="cb" style="left:40px;top:3px;border-color:#9a9a9a"></div></div><div class="c ed" style="left:1358px;width:208px;">Slow</div><div class="c ed" style="left:1568px;width:70px;"><svg style="position:absolute;left:26px;top:0px" width="18" height="17" viewBox="0 0 18 17"><rect x="2.4" y="3.1" width="11.3" height="11.3" rx="2.3" fill="none" stroke="#3a3a3a" stroke-width="1.2"/><path d="M4.7 8.2 L8.2 11.4 L15.4 4.2" fill="none" stroke="#1a1a1a" stroke-width="2.7" stroke-linejoin="miter" stroke-linecap="butt"/></svg></div></div><div class="row lt" style="top:484px"><div class="ind0" style="left:0;width:64px"></div><div class="ind" style="left:0;width:31px"></div><div class="ind" style="left:33px;width:31px"></div><div class="c ro" style="left:65px;width:279px;">2674 6 39 03 117 01 5</div><div class="c ro" style="left:346px;width:410px;">2674 6 39 03 117 01 5</div><div class="c ro" style="left:758px;width:182px;">Level</div><div class="c ro" style="left:942px;width:181px;">Slow</div><div class="c ed" style="left:1125px;width:137px;text-align:right">0.0000</div><div class="c ro" style="left:1264px;width:92px;"><div class="cb" style="left:40px;top:3px;border-color:#9a9a9a"></div></div><div class="c ed" style="left:1358px;width:208px;">Slow</div><div class="c ed" style="left:1568px;width:70px;"><svg style="position:absolute;left:26px;top:0px" width="18" height="17" viewBox="0 0 18 17"><rect x="2.4" y="3.1" width="11.3" height="11.3" rx="2.3" fill="none" stroke="#3a3a3a" stroke-width="1.2"/><path d="M4.7 8.2 L8.2 11.4 L15.4 4.2" fill="none" stroke="#1a1a1a" stroke-width="2.7" stroke-linejoin="miter" stroke-linecap="butt"/></svg></div></div><div class="row alt" style="top:505px"><div class="ind0" style="left:0;width:64px"></div><div class="ind" style="left:0;width:31px"></div><div class="ind" style="left:33px;width:31px"></div><div class="c ro" style="left:65px;width:279px;">2675 11701</div><div class="c ro" style="left:346px;width:410px;">2675 11701</div><div class="c ro" style="left:758px;width:182px;">Level</div><div class="c ro" style="left:942px;width:181px;">Slow</div><div class="c ed" style="left:1125px;width:137px;text-align:right">0.0000</div><div class="c ro" style="left:1264px;width:92px;"><div class="cb" style="left:40px;top:3px;border-color:#9a9a9a"></div></div><div class="c ed" style="left:1358px;width:208px;">Slow</div><div class="c ed" style="left:1568px;width:70px;"><svg style="position:absolute;left:26px;top:0px" width="18" height="17" viewBox="0 0 18 17"><rect x="2.4" y="3.1" width="11.3" height="11.3" rx="2.3" fill="none" stroke="#3a3a3a" stroke-width="1.2"/><path d="M4.7 8.2 L8.2 11.4 L15.4 4.2" fill="none" stroke="#1a1a1a" stroke-width="2.7" stroke-linejoin="miter" stroke-linecap="butt"/></svg></div></div><div class="row lt" style="top:526px"><div class="ind0" style="left:0;width:64px"></div><div class="ind" style="left:0;width:31px"></div><div class="ind" style="left:33px;width:31px"></div><div class="c ro" style="left:65px;width:279px;">2676 63730015010</div><div class="c ro" style="left:346px;width:410px;">2676 63730015010</div><div class="c ro" style="left:758px;width:182px;">Level</div><div class="c ro" style="left:942px;width:181px;">Slow</div><div class="c ed" style="left:1125px;width:137px;text-align:right">0.0000</div><div class="c ro" style="left:1264px;width:92px;"><div class="cb" style="left:40px;top:3px;border-color:#9a9a9a"></div></div><div class="c ed" style="left:1358px;width:208px;">Slow</div><div class="c ed" style="left:1568px;width:70px;"><svg style="position:absolute;left:26px;top:0px" width="18" height="17" viewBox="0 0 18 17"><rect x="2.4" y="3.1" width="11.3" height="11.3" rx="2.3" fill="none" stroke="#3a3a3a" stroke-width="1.2"/><path d="M4.7 8.2 L8.2 11.4 L15.4 4.2" fill="none" stroke="#1a1a1a" stroke-width="2.7" stroke-linejoin="miter" stroke-linecap="butt"/></svg></div></div><div class="row alt" style="top:547px"><div class="ind0" style="left:0;width:64px"></div><div class="ind" style="left:0;width:31px"></div><div class="ind" style="left:33px;width:31px"></div><div class="c ro" style="left:65px;width:279px;">2677 39200</div><div class="c ro" style="left:346px;width:410px;">2677 39200</div><div class="c ro" style="left:758px;width:182px;">Level</div><div class="c ro" style="left:942px;width:181px;">Slow</div><div class="c ed" style="left:1125px;width:137px;text-align:right">0.0000</div><div class="c ro" style="left:1264px;width:92px;"><div class="cb" style="left:40px;top:3px;border-color:#9a9a9a"></div></div><div class="c ed" style="left:1358px;width:208px;">Slow</div><div class="c ed" style="left:1568px;width:70px;"><svg style="position:absolute;left:26px;top:0px" width="18" height="17" viewBox="0 0 18 17"><rect x="2.4" y="3.1" width="11.3" height="11.3" rx="2.3" fill="none" stroke="#3a3a3a" stroke-width="1.2"/><path d="M4.7 8.2 L8.2 11.4 L15.4 4.2" fill="none" stroke="#1a1a1a" stroke-width="2.7" stroke-linejoin="miter" stroke-linecap="butt"/></svg></div></div><div class="row lt" style="top:568px"><div class="ind0" style="left:0;width:64px"></div><div class="ind" style="left:0;width:31px"></div><div class="ind" style="left:33px;width:31px"></div><div class="c ro" style="left:65px;width:279px;">2678 12540</div><div class="c ro" style="left:346px;width:410px;">2678 12540</div><div class="c ro" style="left:758px;width:182px;">Level</div><div class="c ro" style="left:942px;width:181px;">Slow</div><div class="c ed" style="left:1125px;width:137px;text-align:right">0.0000</div><div class="c ro" style="left:1264px;width:92px;"><div class="cb" style="left:40px;top:3px;border-color:#9a9a9a"></div></div><div class="c ed" style="left:1358px;width:208px;">Slow</div><div class="c ed" style="left:1568px;width:70px;"><svg style="position:absolute;left:26px;top:0px" width="18" height="17" viewBox="0 0 18 17"><rect x="2.4" y="3.1" width="11.3" height="11.3" rx="2.3" fill="none" stroke="#3a3a3a" stroke-width="1.2"/><path d="M4.7 8.2 L8.2 11.4 L15.4 4.2" fill="none" stroke="#1a1a1a" stroke-width="2.7" stroke-linejoin="miter" stroke-linecap="butt"/></svg></div></div><div class="row alt" style="top:589px"><div class="ind0" style="left:0;width:64px"></div><div class="ind" style="left:0;width:31px"></div><div class="ind" style="left:33px;width:31px"></div><div class="c ro" style="left:65px;width:279px;">2679 12540</div><div class="c ro" style="left:346px;width:410px;">2679 12540</div><div class="c ro" style="left:758px;width:182px;">Level</div><div class="c ro" style="left:942px;width:181px;">Slow</div><div class="c ed" style="left:1125px;width:137px;text-align:right">0.0000</div><div class="c ro" style="left:1264px;width:92px;"><div class="cb" style="left:40px;top:3px;border-color:#9a9a9a"></div></div><div class="c ed" style="left:1358px;width:208px;">Slow</div><div class="c ed" style="left:1568px;width:70px;"><svg style="position:absolute;left:26px;top:0px" width="18" height="17" viewBox="0 0 18 17"><rect x="2.4" y="3.1" width="11.3" height="11.3" rx="2.3" fill="none" stroke="#3a3a3a" stroke-width="1.2"/><path d="M4.7 8.2 L8.2 11.4 L15.4 4.2" fill="none" stroke="#1a1a1a" stroke-width="2.7" stroke-linejoin="miter" stroke-linecap="butt"/></svg></div></div></div><div class="a" style="left:1651px;top:285px;width:16px;height:601px;background:#f0f0f0"></div><div class="a" style="left:1653px;top:303px;width:12px;height:505px;background:#c1c1c1"></div><svg class="a" style="left:1655px;top:292px" width="8" height="5" viewBox="0 0 8 5"><path d="M0 5 L4 0.5 L8 5 Z" fill="#9a9a9a"/></svg><svg class="a" style="left:1655px;top:874px" width="8" height="5" viewBox="0 0 8 5"><path d="M0 0 L8 0 L4 4.5 Z" fill="#6a6a6a"/></svg><div id="pager" class="a"></div><div class="a" style="left:12px;top:921px;width:1655px;height:6px;background:#f6f6f6"></div><div class="a" style="left:1px;top:927px;width:1666px;height:1px;background:#fff"></div><div class="a" style="left:1px;top:928px;width:1666px;height:1px;background:#555"></div><div class="a" style="left:0;top:929px;width:1667px;height:1px;background:#fff"></div><div class="a pb" style="left:16px"></div><svg class="a" style="left:16px;top:891px" width="26" height="26" viewBox="0 0 26 26"><rect x="9" y="9" width="1.5" height="8" fill="#222"/><path d="M16.5 9 L16.5 17 L11 13 Z" fill="#222"/></svg><div class="a pb" style="left:44px"></div><svg class="a" style="left:44px;top:891px" width="26" height="26" viewBox="0 0 26 26"><path d="M15.5 9 L15.5 17 L10 13 Z" fill="#222"/></svg><div class="a pb" style="left:398px"></div><svg class="a" style="left:398px;top:891px" width="26" height="26" viewBox="0 0 26 26"><path d="M10.5 9 L10.5 17 L16 13 Z" fill="#222"/></svg><div class="a pb" style="left:426px"></div><svg class="a" style="left:426px;top:891px" width="26" height="26" viewBox="0 0 26 26"><path d="M9.5 9 L9.5 17 L15 13 Z" fill="#222"/><rect x="15.5" y="9" width="1.5" height="8" fill="#222"/></svg><div class="a pn" style="left:81px">...</div><div class="a" style="left:100px;top:891px;width:26px;height:26px;border-radius:50%;background:#ee5a16;color:#fff;font-size:12px;font-weight:bold;line-height:26px;text-align:center">41</div><div class="a pn" style="left:125px;width:30px;text-align:center">42</div><div class="a pn" style="left:152px;width:30px;text-align:center">43</div><div class="a pn" style="left:179px;width:30px;text-align:center">44</div><div class="a pn" style="left:206px;width:30px;text-align:center">45</div><div class="a pn" style="left:233px;width:30px;text-align:center">46</div><div class="a pn" style="left:260px;width:30px;text-align:center">47</div><div class="a pn" style="left:287px;width:30px;text-align:center">48</div><div class="a pn" style="left:314px;width:30px;text-align:center">49</div><div class="a pn" style="left:341px;width:30px;text-align:center">50</div><div class="a pn" style="left:377px">...</div><div class="a pn" style="left:1452px;width:200px;text-align:right">1201 - 1230 of 4069 items</div></body></html>
